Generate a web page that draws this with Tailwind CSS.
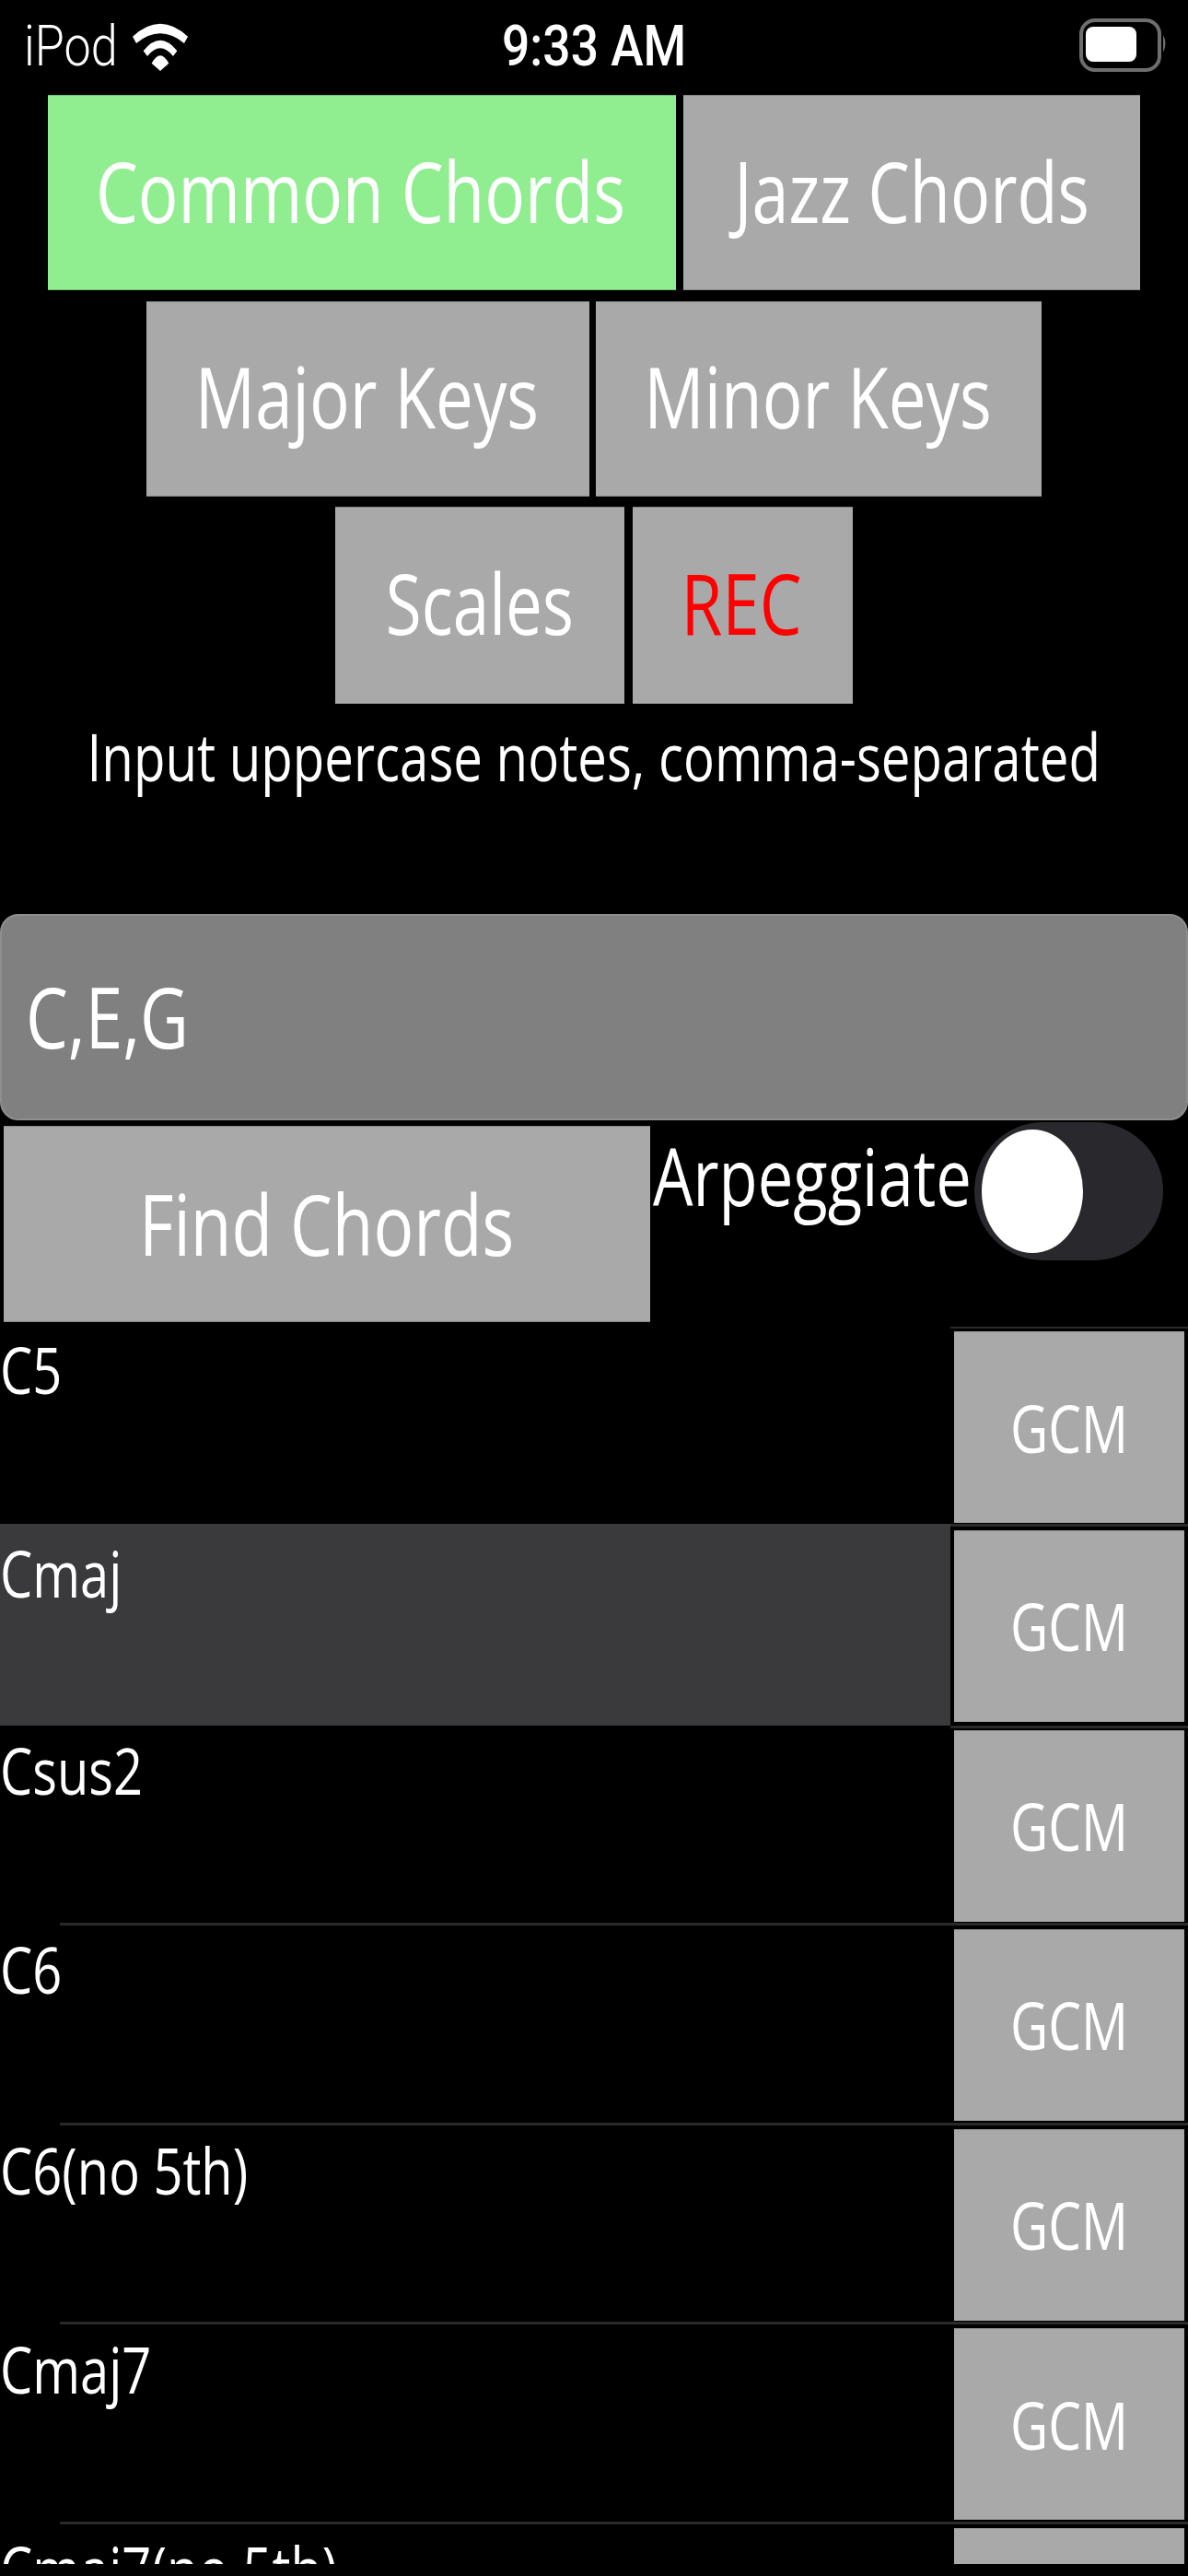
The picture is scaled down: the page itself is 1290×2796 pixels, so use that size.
<!DOCTYPE html>
<html lang="en">
<head>
    <meta charset="UTF-8">
    <meta name="viewport" content="width=device-width, initial-scale=1.0">
    <title>Chord Finder</title>
    <script src="https://cdn.jsdelivr.net/npm/@tailwindcss/browser@4"></script>
</head>
<body class="bg-black">
<div class="w-[1290px] h-[2796px] bg-black overflow-hidden flex flex-col text-white font-['Open_Sans',sans-serif]">

    <!-- Status bar -->
    <div class="h-[103px] shrink-0 flex items-start relative font-['Roboto',sans-serif]">
        <span class="ml-[26px] mt-[19px] text-[62px] leading-[62px] font-light scale-x-[0.84] origin-left inline-block">iPod</span>
        <svg class="absolute left-[144px] top-[23px]" width="60" height="54" viewBox="0 0 180 162" fill="#fff">
            <path d="M0 50 Q90 -34 180 50 L168 72 Q90 8 12 72 Z"/>
            <path d="M35 97 Q90 28 145 97 L132 114 Q90 62 48 114 Z"/>
            <path d="M62 137 Q90 86 118 137 L90 162 Z"/>
        </svg>
        <span class="absolute left-[545px] top-[19px] text-[62px] leading-[62px] font-medium scale-x-[0.86] origin-left inline-block whitespace-nowrap">9:33 AM</span>
        <svg class="absolute left-[1170px] top-[18px]" width="100" height="60" viewBox="0 0 100 60">
            <rect x="4" y="4" width="85" height="54" rx="15" fill="none" stroke="#6e6e6e" stroke-width="4"/>
            <rect x="9" y="11" width="55" height="38" rx="8" fill="#fff"/>
            <path d="M93 20 Q98 29 93 39 Z" fill="#6e6e6e"/>
        </svg>
    </div>

    <!-- Chord set buttons -->
    <div class="flex justify-center gap-[8px]">
        <button class="w-[682px] h-[212px] pb-[3px] bg-[#90ee90] border-y border-black/20 flex items-center justify-center"><span class="text-[91px] leading-none scale-x-[0.8] inline-block whitespace-nowrap -ml-[3px]">Common Chords</span></button>
        <button class="w-[496px] h-[212px] pb-[3px] bg-[#a9a9a9] border-y border-black/20 flex items-center justify-center"><span class="text-[91px] leading-none scale-x-[0.79] inline-block whitespace-nowrap">Jazz Chords</span></button>
    </div>
    <div class="flex justify-center gap-[7px] mt-[12px]">
        <button class="w-[481px] h-[212px] pb-[5px] bg-[#a9a9a9] border-y border-black/20 flex items-center justify-center"><span class="text-[91px] leading-none scale-x-[0.8] inline-block whitespace-nowrap -ml-[3px]">Major Keys</span></button>
        <button class="w-[484px] h-[212px] pb-[5px] bg-[#a9a9a9] border-y border-black/20 flex items-center justify-center"><span class="text-[91px] leading-none scale-x-[0.8] inline-block whitespace-nowrap -ml-[3px]">Minor Keys</span></button>
    </div>
    <div class="flex justify-center gap-[9px] mt-[11px]">
        <button class="w-[314px] h-[214px] pb-[5px] bg-[#a9a9a9] border-y border-black/20 flex items-center justify-center"><span class="text-[91px] leading-none scale-x-[0.78] inline-block whitespace-nowrap">Scales</span></button>
        <button class="w-[239px] h-[214px] pb-[5px] bg-[#a9a9a9] border-y border-black/20 flex items-center justify-center text-[#ff0000]"><span class="text-[91px] leading-none scale-x-[0.8] inline-block whitespace-nowrap -ml-[3px]">REC</span></button>
    </div>

    <div class="h-[228px] flex justify-center pt-[17px]">
        <span class="text-[70.5px] leading-[80px] scale-x-[0.8] inline-block whitespace-nowrap shrink-0">Input uppercase notes, comma-separated</span>
    </div>

    <!-- Notes input -->
    <div class="h-[224px] shrink-0 bg-[#808080] border-2 border-[#8e8e8e] rounded-[20px] flex items-center pl-[26px] pb-[2px]">
        <span class="text-[91px] leading-none scale-x-[0.8] origin-left inline-block">C,E,G</span>
    </div>

    <div class="h-[221px] shrink-0 flex items-start">
        <button class="ml-[4px] mt-[6px] w-[702px] h-[213px] bg-[#a9a9a9] border-y border-black/20 flex items-center justify-center"><span class="text-[91px] leading-none scale-x-[0.8] inline-block whitespace-nowrap">Find Chords</span></button>
        <span class="ml-[3px] mt-[10px] w-[340px] text-[86px] leading-[100px] scale-x-[0.8] origin-left inline-block whitespace-nowrap">Arpeggiate</span>
        <div class="ml-auto mr-[27px] mt-[2px] w-[205px] h-[150px] rounded-[75px] bg-[#29292d] flex items-center pl-[8px]">
            <div class="w-[110px] h-[134px] rounded-[50%] bg-white"></div>
        </div>
    </div>

    <!-- Chord list -->
    <div class="h-[1346px] shrink-0 overflow-hidden">
        <div class="h-[216.67px] pt-[3px]">
            <div class="h-[2px] ml-[1032px] bg-[#2a2a2c]"></div>
            <div class="flex h-[211.67px]">
                <div class="flex-1 text-[70px] leading-[80px] pt-[4px]"><span class="scale-x-[0.8] origin-left inline-block whitespace-nowrap">C5</span></div>
                <div class="w-[258px] pl-[4px] pr-[4px] pt-[3px]"><button class="w-full h-[208px] bg-[#a9a9a9] border-y border-black/10 flex items-center justify-center"><span class="text-[71px] leading-none scale-x-[0.8] inline-block">GCM</span></button></div>
            </div>
        </div>
        <div class="h-[219px] bg-[#3a3a3c]">
            <div class="h-[3px] ml-[1032px] bg-[#2a2a2c]"></div>
            <div class="flex h-[216px]">
                <div class="flex-1 text-[70px] leading-[80px] pt-[10px]"><span class="scale-x-[0.8] origin-left inline-block whitespace-nowrap">Cmaj</span></div>
                <div class="w-[258px] h-full pl-[4px] pr-[4px] pt-[4px] bg-black"><button class="w-full h-[208px] bg-[#a9a9a9] border-y border-black/10 flex items-center justify-center"><span class="text-[71px] leading-none scale-x-[0.8] inline-block">GCM</span></button></div>
            </div>
        </div>
        <div class="h-[214.33px]">
            <div class="h-[3px] ml-[1032px] bg-[#2a2a2c]"></div>
            <div class="flex h-[211.33px]">
                <div class="flex-1 text-[70px] leading-[80px] pt-[5px]"><span class="scale-x-[0.8] origin-left inline-block whitespace-nowrap">Csus2</span></div>
                <div class="w-[258px] pl-[4px] pr-[4px] pt-[2px]"><button class="w-full h-[208px] bg-[#a9a9a9] border-y border-black/10 flex items-center justify-center"><span class="text-[71px] leading-none scale-x-[0.8] inline-block">GCM</span></button></div>
            </div>
        </div>
        <div class="h-[216.67px]">
            <div class="h-[3px] ml-[65px] bg-[#2a2a2c]"></div>
            <div class="flex h-[213.67px]">
                <div class="flex-1 text-[70px] leading-[80px] pt-[7px]"><span class="scale-x-[0.8] origin-left inline-block whitespace-nowrap">C6</span></div>
                <div class="w-[258px] pl-[4px] pr-[4px] pt-[4px]"><button class="w-full h-[208px] bg-[#a9a9a9] border-y border-black/10 flex items-center justify-center"><span class="text-[71px] leading-none scale-x-[0.8] inline-block">GCM</span></button></div>
            </div>
        </div>
        <div class="h-[216.67px]">
            <div class="h-[3px] ml-[65px] bg-[#2a2a2c]"></div>
            <div class="flex h-[213.67px]">
                <div class="flex-1 text-[70px] leading-[80px] pt-[8px]"><span class="scale-x-[0.8] origin-left inline-block whitespace-nowrap">C6(no 5th)</span></div>
                <div class="w-[258px] pl-[4px] pr-[4px] pt-[4px]"><button class="w-full h-[208px] bg-[#a9a9a9] border-y border-black/10 flex items-center justify-center"><span class="text-[71px] leading-none scale-x-[0.8] inline-block">GCM</span></button></div>
            </div>
        </div>
        <div class="h-[216.67px]">
            <div class="h-[3px] ml-[65px] bg-[#2a2a2c]"></div>
            <div class="flex h-[213.67px]">
                <div class="flex-1 text-[70px] leading-[80px] pt-[8px]"><span class="scale-x-[0.8] origin-left inline-block whitespace-nowrap">Cmaj7</span></div>
                <div class="w-[258px] pl-[4px] pr-[4px] pt-[4px]"><button class="w-full h-[208px] bg-[#a9a9a9] border-y border-black/10 flex items-center justify-center"><span class="text-[71px] leading-none scale-x-[0.8] inline-block">GCM</span></button></div>
            </div>
        </div>
        <div class="h-[216.67px]">
            <div class="h-[3px] ml-[65px] bg-[#2a2a2c]"></div>
            <div class="flex h-[213.67px]">
                <div class="flex-1 text-[70px] leading-[80px] pt-[8px]"><span class="scale-x-[0.8] origin-left inline-block whitespace-nowrap">Cmaj7(no 5th)</span></div>
                <div class="w-[258px] pl-[4px] pr-[4px] pt-[4px]"><button class="w-full h-[208px] bg-[#a9a9a9] border-y border-black/10 flex items-center justify-center"><span class="text-[71px] leading-none scale-x-[0.8] inline-block">GCM</span></button></div>
            </div>
        </div>
    </div>
</div>
</body>
</html>
